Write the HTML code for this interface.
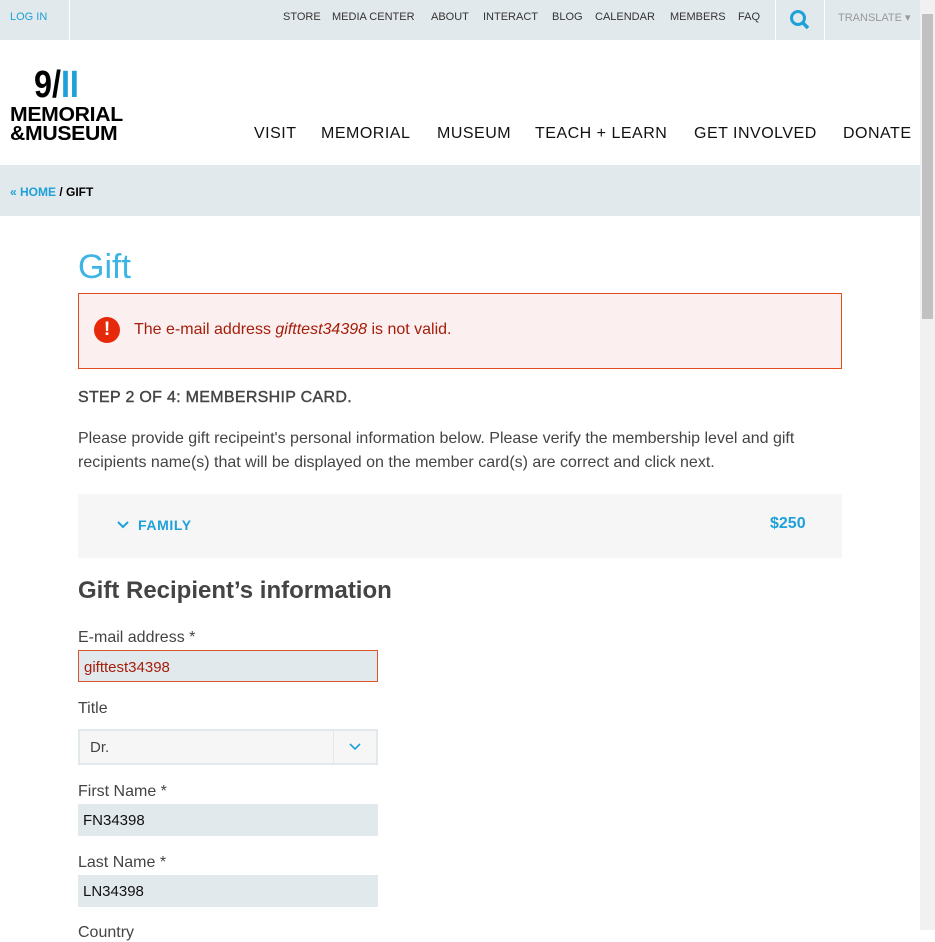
<!DOCTYPE html>
<html><head><style>
*{box-sizing:border-box;margin:0;padding:0}
body{width:935px;height:930px;overflow:hidden;font-family:"Liberation Sans",sans-serif;background:#fff;position:relative}
.a{position:absolute}
.top{left:0;top:0;width:920px;height:40px;background:#e2e9ec}
.top span{position:absolute;top:11px;font-size:11px;color:#333}
.nav{top:125px;font-size:16px;color:#111;letter-spacing:.5px}
label{position:absolute;left:78px;font-size:16px;color:#444}
.inp{position:absolute;left:78px;width:300px;height:32px;background:#e2e9ec;font-size:15px;padding:8px 5px;color:#111}
</style></head><body>
<div class="a top">
<span style="left:10px;color:#1ea0d8">LOG IN</span>
<div class="a" style="left:69px;top:0;width:1px;height:40px;background:#fff"></div>
<span style="left:283px">STORE</span><span style="left:332px">MEDIA CENTER</span><span style="left:431px">ABOUT</span><span style="left:483px">INTERACT</span><span style="left:552px">BLOG</span><span style="left:595px">CALENDAR</span><span style="left:670px">MEMBERS</span><span style="left:738px">FAQ</span>
<div class="a" style="left:775px;top:0;width:1px;height:40px;background:#fff"></div>
<div class="a" style="left:824px;top:0;width:1px;height:40px;background:#fff"></div>
<svg class="a" style="left:789px;top:9px" width="22" height="22"><circle cx="9" cy="9" r="6.5" stroke="#1ea0d8" stroke-width="3" fill="none"/><line x1="13" y1="13" x2="19" y2="19" stroke="#1ea0d8" stroke-width="3.5"/></svg>
<span style="left:838px;color:#999">TRANSLATE ▾</span>
</div>
<div class="a" style="left:920px;top:0;width:15px;height:930px;background:#f1f1f1"></div>
<div class="a" style="left:922px;top:14px;width:11px;height:305px;background:#c1c1c1"></div>
<div class="a" style="left:34px;top:66px;font-size:38px;font-weight:bold;line-height:38px;transform:scaleX(.85);transform-origin:left">9/<span style="color:#1ea0d8">II</span></div>
<div class="a" style="left:10px;top:106px;font-size:20px;font-weight:bold;line-height:19px;letter-spacing:-.3px;transform:scaleX(1.06);transform-origin:left">MEMORIAL<br>&amp;MUSEUM</div>
<span class="a nav" style="left:254px">VISIT</span><span class="a nav" style="left:321px">MEMORIAL</span><span class="a nav" style="left:437px">MUSEUM</span><span class="a nav" style="left:535px">TEACH + LEARN</span><span class="a nav" style="left:694px">GET INVOLVED</span><span class="a nav" style="left:843px">DONATE</span>
<div class="a" style="left:0;top:165px;width:920px;height:51px;background:#e2e9ec;padding:20px 10px;font-size:12px;font-weight:bold"><span style="color:#1ea0d8">« HOME</span> / GIFT</div>
<div class="a" style="left:78px;top:248px;font-size:34px;color:#3cb4e5;font-weight:300">Gift</div>
<div class="a" style="left:78px;top:293px;width:764px;height:76px;background:#fbf0ef;border:1px solid #e04b1f"></div>
<div class="a" style="left:94px;top:317px;width:26px;height:26px;border-radius:50%;background:#e5290a;color:#fff;font-weight:bold;text-align:center;font-size:19px;line-height:26px">!</div>
<div class="a" style="left:134px;top:321px;font-size:16px;color:#a51d0b">The e-mail address <i>gifttest34398</i> is not valid.</div>
<div class="a" style="left:78px;top:389px;font-size:16px;color:#444;letter-spacing:.3px;-webkit-text-stroke:.4px #444">STEP 2 OF 4: MEMBERSHIP CARD.</div>
<div class="a" style="left:78px;top:427px;width:760px;font-size:16px;line-height:24px;color:#444">Please provide gift recipeint's personal information below. Please verify the membership level and gift recipients name(s) that will be displayed on the member card(s) are correct and click next.</div>
<div class="a" style="left:78px;top:494px;width:764px;height:64px;background:#f6f6f6"></div>
<svg class="a" style="left:116px;top:520px" width="14" height="10"><path d="M2 2 L7 7 L12 2" stroke="#1ea0d8" stroke-width="2" fill="none"/></svg>
<div class="a" style="left:138px;top:517px;font-size:14px;color:#1ea0d8;font-weight:bold;letter-spacing:.6px">FAMILY</div>
<div class="a" style="left:770px;top:515px;font-size:16px;color:#1ea0d8;font-weight:bold">$250</div>
<div class="a" style="left:78px;top:577px;font-size:24px;font-weight:bold;color:#444">Gift Recipient’s information</div>
<label style="top:629px">E-mail address *</label>
<div class="inp" style="top:650px;border:1px solid #d9532d;color:#a51d0b">gifttest34398</div>
<label style="top:700px">Title</label>
<div class="inp" style="top:729px;height:36px;background:#f6f6f6;border:2px solid #e2e9ec;padding:8px 10px;color:#444">Dr.</div>
<div class="a" style="left:333px;top:731px;width:1px;height:32px;background:#e2e9ec"></div>
<svg class="a" style="left:348px;top:742px" width="14" height="10"><path d="M2 2 L7 7 L12 2" stroke="#1ea0d8" stroke-width="1.6" fill="none"/></svg>
<label style="top:783px">First Name *</label>
<div class="inp" style="top:804px">FN34398</div>
<label style="top:854px">Last Name *</label>
<div class="inp" style="top:875px">LN34398</div>
<label style="top:924px">Country</label>
</body></html>
